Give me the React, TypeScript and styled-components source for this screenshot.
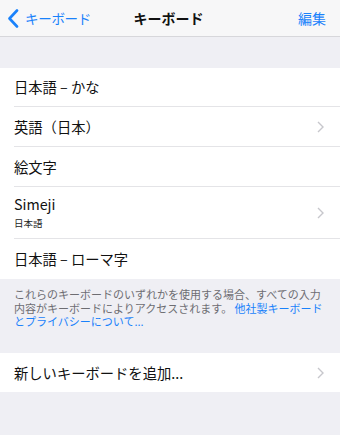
import styled, { createGlobalStyle } from "styled-components";

const GlobalStyle = createGlobalStyle`
  html, body {
    margin: 0;
    padding: 0;
    background: #efeff4;
  }
  body {
    font-family: "Noto Sans CJK JP", "Noto Sans", "Liberation Sans", sans-serif;
    -webkit-font-smoothing: antialiased;
  }
`;

const Screen = styled.div`
  width: 340px;
  height: 435px;
  background: #efeff4;
  overflow: hidden;
`;

const NavBar = styled.div`
  height: 36px;
  background: #f7f7f8;
  border-bottom: 1px solid #d7d7db;
  display: grid;
  grid-template-columns: 1fr auto 1fr;
  align-items: center;
  padding: 0 14px 0 7px;
`;

const BackButton = styled.div`
  display: flex;
  align-items: center;
  gap: 6px;
  color: #1a82fb;
  font-size: 13.5px;
  letter-spacing: -0.3px;
`;

const Title = styled.div`
  font-size: 14px;
  font-weight: 700;
  color: #111;
  margin-left: 4px;
`;

const EditButton = styled.div`
  justify-self: end;
  color: #1a82fb;
  font-size: 14px;
`;

const Group = styled.div<{ $top: number }>`
  margin-top: ${(p) => p.$top}px;
  background: #fff;
`;

const Row = styled.div<{ $height: number; $last?: boolean }>`
  height: ${(p) => p.$height}px;
  margin-left: 14px;
  padding-right: 16px;
  display: flex;
  align-items: center;
  justify-content: space-between;
  border-bottom: ${(p) => (p.$last ? "none" : "1px solid #e4e4e7")};
  box-sizing: border-box;
`;

const Label = styled.div`
  font-size: 14.3px;
  color: #111;
  line-height: 1.2;
`;

const Sub = styled.div`
  font-size: 9.5px;
  color: #222;
  margin-top: 3px;
`;

const Footer = styled.div`
  padding: 9px 10px 0 14px;
  height: 74px;
  box-sizing: border-box;
  font-size: 11px;
  letter-spacing: 0;
  line-height: 13.5px;
  color: #6d6d72;
  white-space: nowrap;
`;

const Link = styled.span`
  color: #1a82fb;
`;

const Chevron = () => (
  <svg width="7" height="12" viewBox="0 0 7 12">
    <path d="M1 1l5 5-5 5" fill="none" stroke="#c7c7cc" strokeWidth="1.4" />
  </svg>
);

const BackChevron = () => (
  <svg width="12" height="19" viewBox="0 0 12 19">
    <path d="M10 1.5L2.5 9.5 10 17.5" fill="none" stroke="#1a82fb" strokeWidth="2.6" strokeLinecap="round" strokeLinejoin="round" />
  </svg>
);

export default function App() {
  return (
    <Screen>
      <GlobalStyle />
      <NavBar>
        <BackButton>
          <BackChevron />
          キーボード
        </BackButton>
        <Title>キーボード</Title>
        <EditButton>編集</EditButton>
      </NavBar>
      <Group $top={31}>
        <Row $height={39}>
          <Label>日本語 – かな</Label>
        </Row>
        <Row $height={40}>
          <Label>英語（日本）</Label>
          <Chevron />
        </Row>
        <Row $height={40}>
          <Label>絵文字</Label>
        </Row>
        <Row $height={52}>
          <div>
            <Label>Simeji</Label>
            <Sub>日本語</Sub>
          </div>
          <Chevron />
        </Row>
        <Row $height={40} $last>
          <Label>日本語 – ローマ字</Label>
        </Row>
      </Group>
      <Footer>
        これらのキーボードのいずれかを使用する場合、すべての入力
        <br />
        内容がキーボードによりアクセスされます。 <Link>他社製キーボード</Link>
        <br />
        <Link>とプライバシーについて...</Link>
      </Footer>
      <Group $top={0}>
        <Row $height={39} $last>
          <Label>新しいキーボードを追加...</Label>
          <Chevron />
        </Row>
      </Group>
    </Screen>
  );
}
